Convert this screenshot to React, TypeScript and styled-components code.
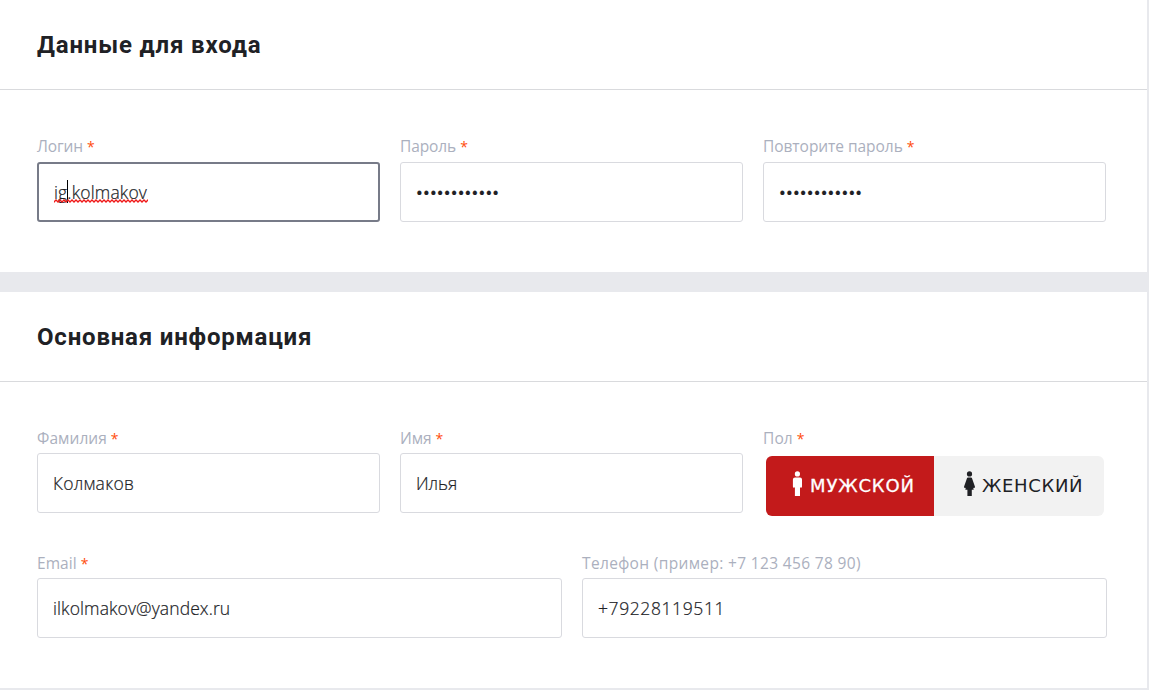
import React from "react";
import styled, { createGlobalStyle } from "styled-components";

const GlobalStyle = createGlobalStyle`
  *, *::before, *::after { box-sizing: border-box; }
  body {
    margin: 0;
    background: #e8e9ed;
    color: #202125;
    font-family: "Open Sans", "Noto Sans", sans-serif;
  }
`;

const Page = styled.main`
  display: flex;
  flex-direction: column;
  gap: 20px;
  height: 690px;
  padding: 0 2px 2px 0;
  overflow: hidden;
`;

const Card = styled.section<{ $height: number }>`
  height: ${(p) => p.$height}px;
  background: #fff;
`;

const CardHeader = styled.header`
  display: flex;
  align-items: center;
  height: 90px;
  padding: 0 37px;
  border-bottom: 1px solid #d9dadd;
`;

const Title = styled.h2<{ $spacing: number }>`
  margin: 0;
  font-family: Roboto, "Liberation Sans", sans-serif;
  font-size: 24px;
  line-height: 30px;
  font-weight: 700;
  letter-spacing: ${(p) => p.$spacing}px;
  white-space: nowrap;
`;

const CardBody = styled.div`
  display: flex;
  flex-direction: column;
  gap: 38px;
  padding: 47px 40px 0 37px;
`;

const Row = styled.div<{ $columns: string }>`
  display: grid;
  grid-template-columns: ${(p) => p.$columns};
  gap: 20px;
`;

const Field = styled.div`
  min-width: 0;
`;

const Label = styled.div<{ $spacing: number; $height?: number }>`
  height: ${(p) => p.$height ?? 24}px;
  font-size: 15.5px;
  line-height: 19px;
  letter-spacing: ${(p) => p.$spacing}px;
  color: #abb0be;
  white-space: nowrap;
`;

const Required = styled.span`
  margin-left: 4px;
  font-size: 14px;
  letter-spacing: 0;
  color: #ff4c0d;
`;

const Control = styled.div<{ $focused?: boolean }>`
  display: flex;
  align-items: center;
  height: 60px;
  padding: 0 15px;
  border: ${(p) => (p.$focused ? "2px solid #777b88" : "1px solid #d9dadf")};
  border-radius: 3px;
`;

const Value = styled.span<{ $spacing: number }>`
  position: relative;
  font-size: 17.5px;
  line-height: 24px;
  font-weight: 300;
  -webkit-text-stroke: 0.2px currentColor;
  letter-spacing: ${(p) => p.$spacing}px;
  white-space: nowrap;
`;

const Dots = styled(Value)`
  padding-top: 1px;
  font-family: Roboto, sans-serif;
  font-size: 20px;
  font-weight: 400;
`;

const Caret = styled.i`
  position: absolute;
  left: 13px;
  top: 0;
  width: 1px;
  height: 23px;
  background: #000;
`;

const Squiggle = styled.svg`
  position: absolute;
  left: 0;
  top: 19px;
`;

const Switch = styled.div`
  display: flex;
  height: 60px;
  margin: 3px 2px 0 3px;
  border-radius: 6px;
  overflow: hidden;
`;

const Option = styled.div<{ $active?: boolean; $spacing: number }>`
  display: flex;
  align-items: center;
  flex: ${(p) => (p.$active ? "0 0 168px" : "1")};
  padding-left: ${(p) => (p.$active ? 26 : 29)}px;
  background: ${(p) => (p.$active ? "#c31a1b" : "#f2f2f2")};
  color: ${(p) => (p.$active ? "#fff" : "#202125")};
  font-family: "DejaVu Sans", sans-serif;
  font-size: 18px;
  line-height: 24px;
  -webkit-text-stroke: ${(p) => (p.$active ? 0.3 : 0)}px currentColor;
  letter-spacing: ${(p) => p.$spacing}px;
  white-space: nowrap;
`;

const Glyph = styled.svg`
  flex: none;
  margin: -5px 7px 0 0;
`;

const Man = () => (
  <Glyph width="11" height="26" viewBox="0 0 11 26" fill="currentColor">
    <circle cx="5.4" cy="2.9" r="2.6" />
    <path d="M3 6.6h5q2 0 2 2v7q0 1.2-1.1 1.2-.8 0-.9-.8V25H2.9v-9q-.1.8-.9.8-1.1 0-1.1-1.2v-7q0-2 2.1-2z" />
  </Glyph>
);

const Woman = () => (
  <Glyph width="12" height="26" viewBox="0 0 12 26" fill="currentColor">
    <circle cx="6.5" cy="2.9" r="2.6" />
    <path d="M5 6.6h3q.8 0 1.1 1l2.8 8q.3 1-.6 1.3-.7.2-1.1-.5l.5 2.3H8.8V25H4.4v-6.3H2.3l.5-2.3q-.4.7-1.1.5-.9-.3-.6-1.3l2.8-8q.3-1 1.1-1z" />
  </Glyph>
);

type FieldData = {
  label: string;
  labelSpacing: number;
  labelHeight?: number;
  required?: boolean;
  value: string;
  spacing: number;
  secret?: boolean;
  focused?: boolean;
};

const FormField = (f: FieldData) => (
  <Field>
    <Label $spacing={f.labelSpacing} $height={f.labelHeight}>
      {f.label}
      {f.required && <Required>*</Required>}
    </Label>
    <Control $focused={f.focused}>
      {f.secret ? (
        <Dots $spacing={f.spacing}>{f.value}</Dots>
      ) : (
        <Value $spacing={f.spacing}>
          {f.value}
          {f.focused && (
            <>
              <Caret />
              <Squiggle width="94" height="4" viewBox="0 0 94 4">
                <defs>
                  <pattern id="wave" width="4" height="4" patternUnits="userSpaceOnUse">
                    <path d="M-1 2L0 3L2 1L4 3L5 2" fill="none" stroke="#f01818" strokeWidth="1.3" />
                  </pattern>
                </defs>
                <rect width="94" height="4" fill="url(#wave)" />
              </Squiggle>
            </>
          )}
        </Value>
      )}
    </Control>
  </Field>
);

const thirds = "repeat(3, 343px)";
const halves = "repeat(2, 1fr)";
const secret = "•".repeat(12);

export default function App() {
  return (
    <>
      <GlobalStyle />
      <Page>
        <Card $height={272}>
          <CardHeader>
            <Title $spacing={0.84}>Данные для входа</Title>
          </CardHeader>
          <CardBody>
            <Row $columns={thirds}>
              <FormField label="Логин" labelSpacing={-0.1} labelHeight={25} required value="ig.kolmakov" spacing={0.15} focused />
              <FormField label="Пароль" labelSpacing={-0.1} labelHeight={25} required value={secret} spacing={0.19} secret />
              <FormField label="Повторите пароль" labelSpacing={-0.05} labelHeight={25} required value={secret} spacing={0.19} secret />
            </Row>
          </CardBody>
        </Card>
        <Card $height={396}>
          <CardHeader>
            <Title $spacing={0.8}>Основная информация</Title>
          </CardHeader>
          <CardBody>
            <Row $columns={thirds}>
              <FormField label="Фамилия" labelSpacing={0.05} required value="Колмаков" spacing={0.25} />
              <FormField label="Имя" labelSpacing={-0.1} required value="Илья" spacing={-0.05} />
              <Field>
                <Label $spacing={0.1}>
                  Пол<Required>*</Required>
                </Label>
                <Switch>
                  <Option $active $spacing={0.85}>
                    <Man />
                    МУЖСКОЙ
                  </Option>
                  <Option $spacing={0.65}>
                    <Woman />
                    ЖЕНСКИЙ
                  </Option>
                </Switch>
              </Field>
            </Row>
            <Row $columns={halves}>
              <FormField label="Email" labelSpacing={0.05} required value="ilkolmakov@yandex.ru" spacing={0.1} />
              <FormField label="Телефон (пример: +7 123 456 78 90)" labelSpacing={0.34} value="+79228119511" spacing={0.6} />
            </Row>
          </CardBody>
        </Card>
      </Page>
    </>
  );
}
